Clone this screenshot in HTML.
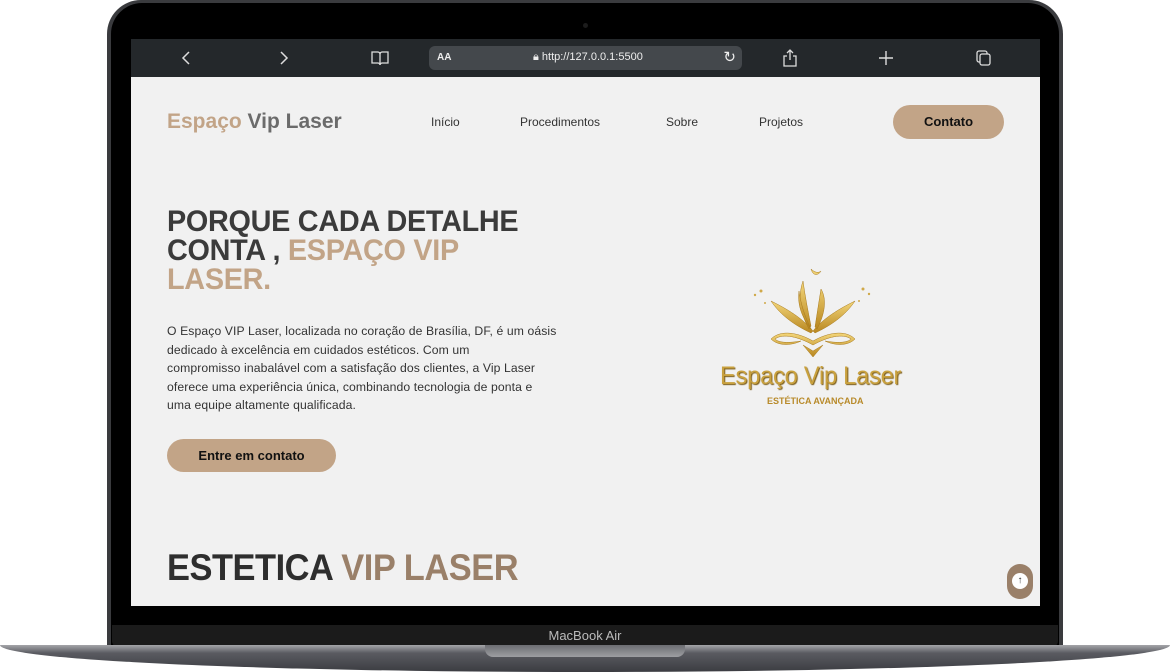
<!DOCTYPE html>
<html><head><meta charset="utf-8"><style>
*{margin:0;padding:0;box-sizing:border-box}
body{width:1170px;height:672px;background:#fff;position:relative;overflow:hidden;font-family:"Liberation Sans",sans-serif}
.lid{position:absolute;left:107px;top:0;width:956px;height:648px;background:#3a3b3e;border-radius:34px 34px 0 0}
.bezel{position:absolute;left:111px;top:3px;width:948px;height:645px;background:#000;border-radius:31px 31px 0 0}
.cam{position:absolute;left:583px;top:23px;width:5px;height:5px;border-radius:50%;background:#1c1c1c}
.chin{position:absolute;left:112px;top:625px;width:946px;height:22px;background:#1b1b1b;border-radius:0 0 6px 6px;color:#bbb;font-size:13px;text-align:center;line-height:22px}
.base{position:absolute;left:0;top:645px;width:1170px;height:27px;background:linear-gradient(#a4a5a9 0,#8a8b90 3px,#5a5b61 8px,#3b3c41 27px);border-radius:0 0 50% 50%/0 0 100% 100%}
.notch{position:absolute;left:485px;top:645px;width:200px;height:12px;background:linear-gradient(#6c6d72,#9d9ea2);border-radius:0 0 8px 8px}
.screen{position:absolute;left:131px;top:39px;width:909px;height:567px;background:#f1f1f1;overflow:hidden}
.bar{position:absolute;left:0;top:0;width:909px;height:38px;background:#24282b;color:#ddd}
.url{position:absolute;left:298px;top:7px;width:313px;height:24px;background:#44484c;border-radius:6px;color:#eee;font-size:11px}
.ic{position:absolute;color:#ddd;font-size:18px;line-height:38px;top:0}
.nav a{position:absolute;top:76px;font-size:12px;color:#333;text-decoration:none}
h1{position:absolute;left:36px;top:168px;font-size:30px;line-height:29px;font-weight:900;color:#3b3b3b;letter-spacing:-0.3px;transform:scaleX(0.96);transform-origin:left}
.g{color:#c2a487}
p.t{position:absolute;left:36px;top:283px;white-space:nowrap;font-size:12.2px;line-height:18.6px;color:#333;letter-spacing:0.1px}
.btn{position:absolute;background:#c2a487;color:#111;font-weight:bold;border-radius:17px;text-align:center}
h2{position:absolute;left:36px;top:508px;font-size:37px;font-weight:900;color:#2e2e2e;letter-spacing:-0.5px;transform:scaleX(0.93);transform-origin:left}
</style></head><body>
<div class="lid"></div><div class="bezel"></div><div class="cam"></div>
<div class="screen">
 <div class="bar">
  <svg class="ic" style="left:50px;top:12px" width="10" height="14"><path d="M8 1 2 7l6 6" stroke="#ddd" stroke-width="1.5" fill="none"/></svg>
  <svg class="ic" style="left:148px;top:12px" width="10" height="14"><path d="M2 1l6 6-6 6" stroke="#ddd" stroke-width="1.5" fill="none"/></svg>
  <svg class="ic" style="left:240px;top:11px" width="18" height="16"><path d="M1 2h6c1 0 2 1 2 2v11c0-1-1-2-2-2H1zM17 2h-6c-1 0-2 1-2 2v11c0-1 1-2 2-2h6z" stroke="#ddd" stroke-width="1.3" fill="none"/></svg>
  <div class="url"><span style="position:absolute;left:8px;top:6px;font-size:10px;font-weight:bold">AA</span><span style="position:absolute;left:104px;top:5px">🔒︎ http://127.0.0.1:5500</span><span style="position:absolute;right:6px;top:2px;font-size:15px">↻</span></div>
  <svg class="ic" style="left:651px;top:10px" width="16" height="18"><path d="M8 1v10M5 4l3-3 3 3M5 7H2v10h12V7h-3" stroke="#ddd" stroke-width="1.3" fill="none"/></svg>
  <svg class="ic" style="left:748px;top:12px" width="14" height="14"><path d="M7 0v14M0 7h14" stroke="#ddd" stroke-width="1.4"/></svg>
  <svg class="ic" style="left:845px;top:11px" width="16" height="16"><rect x="1" y="1" width="10" height="11" rx="2" stroke="#ddd" stroke-width="1.3" fill="none"/><rect x="4" y="4" width="10" height="11" rx="2" stroke="#ddd" stroke-width="1.3" fill="#24282b"/></svg>
 </div>
 <div style="position:absolute;left:36px;top:71px;font-size:21px;font-weight:bold;color:#6b6b6b"><span class="g">Espaço</span> Vip Laser</div>
 <div class="nav"><a style="left:300px">Início</a><a style="left:389px">Procedimentos</a><a style="left:535px">Sobre</a><a style="left:628px">Projetos</a></div>
 <div class="btn" style="left:762px;top:66px;width:111px;height:34px;line-height:34px;font-size:13px">Contato</div>
 <h1>PORQUE CADA DETALHE<br>CONTA , <span class="g">ESPAÇO VIP<br>LASER.</span></h1>
 <p class="t">O Espaço VIP Laser, localizada no coração de Brasília, DF, é um oásis<br>dedicado à excelência em cuidados estéticos. Com um<br>compromisso inabalável com a satisfação dos clientes, a Vip Laser<br>oferece uma experiência única, combinando tecnologia de ponta e<br>uma equipe altamente qualificada.</p>
 <div class="btn" style="left:36px;top:400px;width:169px;height:33px;line-height:33px;font-size:13px">Entre em contato</div>
 <svg style="position:absolute;left:620px;top:222px" width="125" height="100">
  <defs><linearGradient id="gd" x1="0" y1="0" x2="0" y2="1"><stop offset="0" stop-color="#f3d67a"/><stop offset="1" stop-color="#b8861f"/></linearGradient></defs>
  <g fill="url(#gd)" stroke="#a87a1c" stroke-width="0.5">
   <path d="M62 70C50 55 30 45 20 40c10 15 25 25 40 32zM62 70c12-15 32-25 42-30-10 15-25 25-40 32z"/>
   <path d="M58 68c-8-15-12-30-6-48 2 15 5 30 8 45zM66 68c8-15 10-30 4-40-2 12-4 25-6 38z"/>
   <path d="M60 8c4 4 8 4 10 2-3 5-8 5-10-2zM48 30c-2 15 4 28 12 38-6-12-10-24-12-38z"/>
   <path d="M20 78c10-10 28-6 42 2 14-8 32-12 42-2-8 8-22 6-30 2 12 2 22 2 26-2-8-6-24-2-38 6-14-8-30-12-38-6 4 4 14 4 26 2-8 4-22 6-30-2zM52 84l10 12 10-12-10 6z"/>
  </g>
  <g fill="#d0a94a"><circle cx="10" cy="30" r="1.5"/><circle cx="112" cy="28" r="1.5"/><circle cx="14" cy="42" r="1"/><circle cx="108" cy="40" r="1"/><circle cx="118" cy="33" r="1.2"/><circle cx="4" cy="34" r="1.2"/></g>
 </svg>
 <div style="position:absolute;left:589px;top:323px;font-size:25px;color:#c9a13e;text-shadow:1px 1px 1px #7a5a14;letter-spacing:-0.3px;transform:scaleX(0.95);transform-origin:left">Espaço Vip Laser</div>
 <div style="position:absolute;left:636px;top:357px;font-size:9px;font-weight:bold;color:#b88a2a">ESTÉTICA AVANÇADA</div>
 <h2>ESTETICA <span style="color:#9a8069">VIP LASER</span></h2>
 <div style="position:absolute;left:876px;top:525px;width:26px;height:35px;border-radius:13px;background:#9a8069"><div style="position:absolute;left:5px;top:9px;width:16px;height:16px;border-radius:50%;background:#fff;font-size:10px;text-align:center;line-height:16px;color:#333">↑</div></div>
</div>
<div class="chin">MacBook Air</div>
<div class="base"></div><div class="notch"></div>
</body></html>
